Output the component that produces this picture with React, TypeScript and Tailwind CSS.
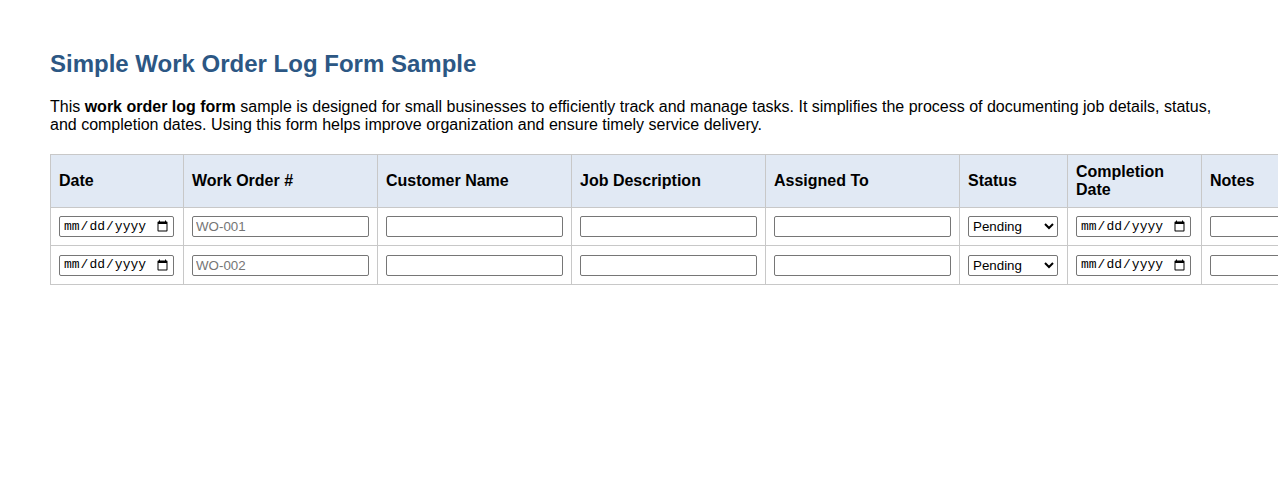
import React from "react";

const columns = [
  { label: "Date", width: 133 },
  { label: "Work Order #", width: 194 },
  { label: "Customer Name", width: 194 },
  { label: "Job Description", width: 194 },
  { label: "Assigned To", width: 194 },
  { label: "Status", width: 108 },
  { label: "Completion Date", width: 134 },
  { label: "Notes", width: 194 },
];

const rows = ["WO-001", "WO-002"];

const textInput =
  "block w-full h-[21px] border border-[#767676] rounded-[2px] bg-white px-[3px] text-[13.33px] text-black placeholder:text-[#757575]";
const dateInput =
  "block w-[115px] h-[21px] border border-[#767676] rounded-[2px] bg-white pl-[3px] pr-[2px] text-[13px] text-black font-['Liberation_Mono',monospace]";

export default function App() {
  return (
    <div className="w-screen min-h-[486px] overflow-hidden bg-white font-['Liberation_Sans',Arial,sans-serif] text-black">
      <div className="pl-[50px] pr-[50px] pt-[50px]">
        {/* Title */}
        <h1 className="text-[24px] leading-[28px] font-bold text-[#2c5784]">
          Simple Work Order Log Form Sample
        </h1>
        <p className="mt-[20px] text-[16px] leading-[18px]">
          This <strong className="font-bold">work order log form</strong> sample is designed for small businesses to
          efficiently track and manage tasks. It simplifies the process of documenting job details, status, and
          completion dates. Using this form helps improve organization and ensure timely service delivery.
        </p>

        {/* Log table */}
        <table className="mt-[20px] w-[1346px] table-fixed border-collapse text-left">
          <colgroup>
            {columns.map((c) => (
              <col key={c.label} style={{ width: c.width }} />
            ))}
          </colgroup>
          <thead>
            <tr className="bg-[#e1e9f4]">
              {columns.map((c) => (
                <th
                  key={c.label}
                  className="border border-[#c8c8c8] p-[8px] text-[16px] leading-[18px] font-bold align-middle h-[53px]"
                >
                  {c.label}
                </th>
              ))}
            </tr>
          </thead>
          <tbody>
            {rows.map((wo, i) => (
              <tr key={wo} className={i === 1 ? "h-[39px]" : "h-[38px]"}>
                <td className="border border-[#c8c8c8] px-[8px]">
                  <input type="date" className={dateInput} />
                </td>
                <td className="border border-[#c8c8c8] px-[8px]">
                  <input type="text" placeholder={wo} className={textInput} />
                </td>
                <td className="border border-[#c8c8c8] px-[8px]">
                  <input type="text" className={textInput} />
                </td>
                <td className="border border-[#c8c8c8] px-[8px]">
                  <input type="text" className={textInput} />
                </td>
                <td className="border border-[#c8c8c8] px-[8px]">
                  <input type="text" className={textInput} />
                </td>
                <td className="border border-[#c8c8c8] px-[8px]">
                  <select
                    defaultValue="Pending"
                    className="block w-[90px] h-[21px] border border-[#767676] rounded-[2px] bg-white text-[13.33px] text-black"
                  >
                    <option>Pending</option>
                    <option>In Progress</option>
                    <option>Completed</option>
                  </select>
                </td>
                <td className="border border-[#c8c8c8] px-[8px]">
                  <input type="date" className={dateInput} />
                </td>
                <td className="border border-[#c8c8c8] px-[8px]">
                  <input type="text" className={textInput} />
                </td>
              </tr>
            ))}
          </tbody>
        </table>
      </div>
    </div>
  );
}
